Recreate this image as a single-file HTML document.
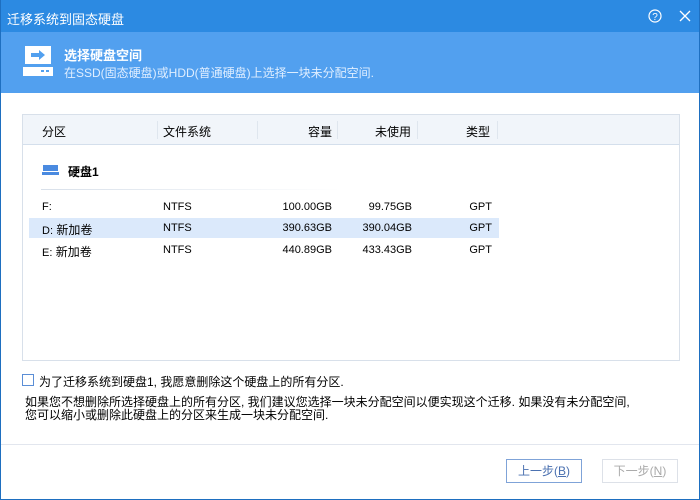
<!DOCTYPE html>
<html><head><meta charset="utf-8"><style>
*{margin:0;padding:0;box-sizing:border-box}
body{width:700px;height:500px;overflow:hidden;font-family:"Liberation Sans","Noto Sans CJK SC",sans-serif;font-size:12px;color:#000;background:#fff;position:relative}
.frame{position:absolute;inset:0;border:1px solid #1e6fc0;border-top:none}
.title{position:absolute;left:0;top:0;width:700px;height:32px;background:#2c8ae2;color:#fff;font-size:13px;padding:9px 0 0 7px}
.hdr{position:absolute;left:0;top:32px;width:700px;height:61px;background:#52a0ef;color:#fff}
.abs{position:absolute;white-space:nowrap}
.tbl{position:absolute;left:22px;top:114px;width:658px;height:247px;border:1px solid #d8e0ea}
.th{position:absolute;left:0;top:0;width:656px;height:30px;background:#f1f5fa;border-bottom:1px solid #d4dfec}
.sep{position:absolute;top:6px;width:1px;height:18px;background:#dfe6ee}
.d{font-size:11px}
.btn{position:absolute;top:459px;width:76px;height:24px;border:1px solid #7fa3d8;color:#4a70b0;text-align:center;line-height:22px;font-size:12px}
</style></head><body>
<div class="title">迁移系统到固态硬盘</div>
<svg class="abs" style="left:648px;top:9px" width="14" height="14"><circle cx="7" cy="7" r="6" fill="none" stroke="#fff" stroke-width="1.2"/><text x="7" y="11" fill="#fff" font-size="10" text-anchor="middle" font-family="Liberation Sans">?</text></svg>
<svg class="abs" style="left:679px;top:10px" width="12" height="12"><path d="M1 1L11 11M11 1L1 11" stroke="#fff" stroke-width="1.3"/></svg>
<div class="hdr">
<svg class="abs" style="left:22px;top:14px" width="32" height="30"><path d="M3 0H29V18H3Z" fill="#fff"/><path d="M1 21H31V30H1Z" fill="#fff"/><path d="M9 7H17V4L23 9L17 14V11H9Z" fill="#52a0ef"/><rect x="19" y="24" width="3" height="2" fill="#52a0ef"/><rect x="24" y="24" width="3" height="2" fill="#52a0ef"/></svg>
<div class="abs" style="left:64px;top:13px;font-weight:bold;font-size:13px">选择硬盘空间</div>
<div class="abs" style="left:64px;top:32px;color:#dfeeff;font-size:12px">在SSD(固态硬盘)或HDD(普通硬盘)上选择一块未分配空间.</div>
</div>
<div class="tbl">
<div class="th">
<span class="abs" style="left:19px;top:8px">分区</span>
<div class="sep" style="left:134px"></div>
<span class="abs" style="left:140px;top:8px">文件系统</span>
<div class="sep" style="left:234px"></div>
<span class="abs" style="left:285px;top:8px">容量</span>
<div class="sep" style="left:314px"></div>
<span class="abs" style="left:352px;top:8px">未使用</span>
<div class="sep" style="left:394px"></div>
<span class="abs" style="left:443px;top:8px">类型</span>
<div class="sep" style="left:474px"></div>
</div>
<svg class="abs" style="left:19px;top:50px" width="17" height="10"><rect x="1" y="0" width="15" height="6" fill="#4a8ae0"/><rect x="0" y="7" width="17" height="3" fill="#4a8ae0"/></svg>
<span class="abs" style="left:45px;top:48px;font-weight:bold">硬盘1</span>
<div class="abs" style="left:18px;top:74px;width:300px;height:1px;background:linear-gradient(to right,#d8e0ea,#fff)"></div>
<div class="abs" style="left:6px;top:103px;width:470px;height:20px;background:#dbe9fb"></div>
<span class="abs d" style="left:19px;top:86px">F:</span><span class="abs d" style="left:140px;top:86px">NTFS</span><span class="abs d" style="right:347px;top:86px">100.00GB</span><span class="abs d" style="right:267px;top:86px">99.75GB</span><span class="abs d" style="right:187px;top:86px">GPT</span>
<span class="abs" style="left:19px;top:106px"><span class="d">D:</span> 新加卷</span><span class="abs d" style="left:140px;top:107px">NTFS</span><span class="abs d" style="right:347px;top:107px">390.63GB</span><span class="abs d" style="right:267px;top:107px">390.04GB</span><span class="abs d" style="right:187px;top:107px">GPT</span>
<span class="abs" style="left:19px;top:128px"><span class="d">E:</span> 新加卷</span><span class="abs d" style="left:140px;top:129px">NTFS</span><span class="abs d" style="right:347px;top:129px">440.89GB</span><span class="abs d" style="right:267px;top:129px">433.43GB</span><span class="abs d" style="right:187px;top:129px">GPT</span>
</div>
<div class="abs" style="left:22px;top:374px;width:12px;height:12px;border:1px solid #5b8ed6"></div>
<span class="abs" style="left:39px;top:373px">为了迁移系统到硬盘1, 我愿意删除这个硬盘上的所有分区.</span>
<div class="abs" style="left:25px;top:396px;line-height:13px">如果您不想删除所选择硬盘上的所有分区, 我们建议您选择一块未分配空间以便实现这个迁移. 如果没有未分配空间,<br>您可以缩小或删除此硬盘上的分区来生成一块未分配空间.</div>
<div class="abs" style="left:0;top:444px;width:700px;height:1px;background:#e2e6ee"></div>
<div class="btn" style="left:506px">上一步(<u>B</u>)</div>
<div class="btn" style="left:602px;border-color:#dde1e8;color:#aaa">下一步(<u>N</u>)</div>
<div class="frame"></div>
</body></html>
